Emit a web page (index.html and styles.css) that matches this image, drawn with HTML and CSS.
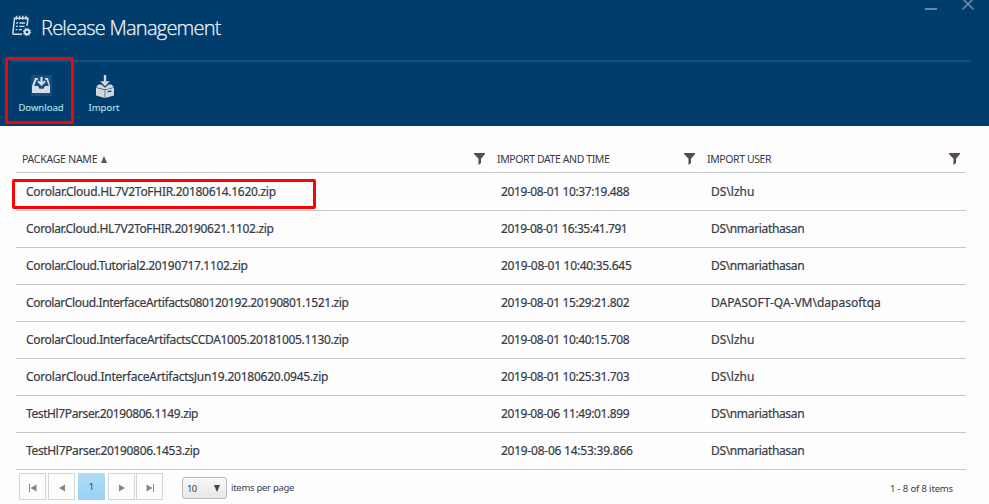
FILE: index.html
```
<!DOCTYPE html>
<html lang="en">
<head>
<meta charset="utf-8">
<title>Release Management</title>
<link rel="stylesheet" href="styles.css">
</head>
<body>
<header class="blade">
  <div class="window-controls">
    <svg width="50" height="12" viewBox="0 0 50 12"><path d="M0 9h12" stroke="#6686a4" stroke-width="2"/><path d="M37.5-1.5l11 11M48.5-1.5l-11 11" stroke="#6f8da8" stroke-width="1.6"/></svg>
  </div>
  <div class="title-row">
    <svg class="title-icon" width="20" height="22" viewBox="0 0 20 22" fill="none" stroke="#d5dde4" stroke-width="1.5">
      <path d="M10 19.2H1.7Q.8 19.2.9 18L2.5 3.2H16L15 11"/>
      <path d="M4.5.8v4M7.6.8v4M10.8.8v4M14 .8v4" stroke-width="1.4"/>
      <path d="M4.3 8h1.8M7.5 8H13M4 11.3h1.8M7.2 11.3h5.3M3.6 14.7h1.8M6.8 14.7H10" stroke-width="1.3"/>
      <circle cx="15" cy="17" r="2.3" stroke-width="2"/>
      <circle cx="15" cy="17" r="3.4" stroke-width="1.3" stroke-dasharray="1.33 1.33"/>
    </svg>
    <h1>Release Management</h1>
  </div>
  <hr>
  <nav class="commands">
    <div class="command boxed">
      <svg width="21" height="21" viewBox="0 0 21 21"><path fill="#174e7a" d="M0 0h21v21H0z"/><path fill="#d2dfe8" d="M4 3h3v1.7H5.5L3.2 11H7l1.5 2.8h4L14 11h3.8l-2.3-6.3H14V3h3l2 8v7H1v-7z"/><path fill="#d2dfe8" d="M9.4 2h2.2v5l2-1.6 1.2 1.4-4.3 4.3-4.3-4.3 1.2-1.4 2 1.6z"/></svg>
      <span>Download</span>
    </div>
    <div class="command">
      <svg class="box-icon" width="20" height="23" viewBox="0 0 20 23" fill="#d3d7db"><path d="M8.8 0h2.4v6.3h3.6L10 11.2 5.2 6.3h3.6zM1 12.2l2.5-2.7h3L10 12.8l3.5-3.3h3l2.5 2.7-8.6 2.2z"/><path d="M1 12.8l8.7 2.2V23L1 20.6zM19 12.8L10.3 15v8l8.7-2.4z"/><path d="M12.8 16.9l3.6-1" stroke="#003c6c" stroke-width="1.5"/></svg>
      <span>Import</span>
    </div>
  </nav>
</header>
<main>
  <div class="grid head">
    <div><span>PACKAGE NAME</span><i class="sort"></i><svg class="filter" width="11" height="12" viewBox="0 0 11 12"><path d="M0 0h11v1L7 5.8V10l-2.5 2V5.8L0 1z"/></svg></div>
    <div><span class="tight">IMPORT DATE AND TIME</span><svg class="filter" width="11" height="12" viewBox="0 0 11 12"><path d="M0 0h11v1L7 5.8V10l-2.5 2V5.8L0 1z"/></svg></div>
    <div><span class="tight">IMPORT USER</span><svg class="filter" width="11" height="12" viewBox="0 0 11 12"><path d="M0 0h11v1L7 5.8V10l-2.5 2V5.8L0 1z"/></svg></div>
  </div>
  <div class="grid row first"><div class="s3"><span class="marked">Corolar.Cloud.HL7V2ToFHIR.20180614.1620.zip</span></div><div class="s4">2019-08-01 10:37:19.488</div><div>DS\lzhu</div></div>
  <div class="grid row"><div class="s35">Corolar.Cloud.HL7V2ToFHIR.20190621.1102.zip</div><div class="s5">2019-08-01 16:35:41.791</div><div class="s35">DS\nmariathasan</div></div>
  <div class="grid row"><div class="s35">Corolar.Cloud.Tutorial2.20190717.1102.zip</div><div class="s3">2019-08-01 10:40:35.645</div><div class="s35">DS\nmariathasan</div></div>
  <div class="grid row"><div class="s4">CorolarCloud.InterfaceArtifacts080120192.20190801.1521.zip</div><div class="s4">2019-08-01 15:29:21.802</div><div>DAPASOFT-QA-VM\dapasoftqa</div></div>
  <div class="grid row"><div class="s35">CorolarCloud.InterfaceArtifactsCCDA1005.20181005.1130.zip</div><div class="s4">2019-08-01 10:40:15.708</div><div>DS\lzhu</div></div>
  <div class="grid row"><div class="s25">CorolarCloud.InterfaceArtifactsJun19.20180620.0945.zip</div><div class="s4">2019-08-01 10:25:31.703</div><div>DS\lzhu</div></div>
  <div class="grid row"><div class="s4">TestHl7Parser.20190806.1149.zip</div><div class="s4">2019-08-06 11:49:01.899</div><div class="s35">DS\nmariathasan</div></div>
  <div class="grid row"><div class="s35">TestHl7Parser.20190806.1453.zip</div><div class="s25">2019-08-06 14:53:39.866</div><div class="s35">DS\nmariathasan</div></div>
  <footer class="pager">
    <span class="page"><svg width="8" height="8"><path d="M0 0h1v8H0zM7.5.5v7L1.5 4z"/></svg></span>
    <span class="page"><svg width="8" height="8"><path d="M7 .5v7L1 4z"/></svg></span>
    <span class="page current">1</span>
    <span class="page"><svg width="8" height="8"><path d="M1 .5v7L7 4z"/></svg></span>
    <span class="page last"><svg width="8" height="8"><path d="M7 0h1v8H7zM.5.5v7l6-3.5z"/></svg></span>
    <span class="size">10<i></i></span>
    <span class="per">items per page</span>
    <span class="count">1 - 8 of 8 items</span>
  </footer>
</main>
</body>
</html>
```
FILE: styles.css
```
*, *::after { box-sizing: border-box; }
body {
  margin: 0;
  height: 504px;
  overflow: hidden;
  background: #fdfdfd;
  color: #383b45;
  font-family: "Noto Sans", "Open Sans", sans-serif;
  font-size: 12px;
}
svg { display: block; flex: none; }
.blade { height: 126px; background: #003c6c; position: relative; }
.window-controls { position: absolute; left: 925px; top: 0; }
.title-row { display: flex; height: 60px; padding: 15px 0 0 12px; }
h1 {
  margin: -1px 0 0 9px;
  font: 300 20px/28px "Open Sans", "Noto Sans", sans-serif;
  letter-spacing: -0.75px;
  color: #f0f4f7;
  -webkit-text-stroke: 0.25px #f0f4f7;
  white-space: nowrap;
}
hr { margin: 0 18px 0 11px; border: 0; height: 2px; background: #174e7a; }
.commands { display: flex; margin-top: -5px; padding-left: 5px; }
.command {
  width: 60px;
  height: 67px;
  padding-top: 18px;
  display: flex;
  flex-direction: column;
  align-items: center;
  font-size: 9.5px;
  line-height: 13px;
  color: #a5dce0;
  -webkit-text-stroke: 0.2px #a5dce0;
}
.command span { margin-top: auto; margin-bottom: 10px; white-space: nowrap; }
.command.boxed { width: 69px; border: 3px solid #f00; border-radius: 2px; padding: 15px 0 0 3px; }
.boxed span { margin-bottom: 7px; }
.box-icon { margin-left: 2px; }
main { padding: 0 23px 0 16px; }
.grid { display: grid; grid-template-columns: 475px 210px 265px; }
.head { height: 47px; padding-top: 20px; font-size: 10.5px; letter-spacing: -0.25px; }
.tight { letter-spacing: -0.4px; }
.head > div {
  display: flex;
  align-items: center;
  padding: 0 6px;
  border-bottom: 1px solid #c8caca;
  white-space: nowrap;
}
.head > div + div { border-left: 1px solid #fdfdfd; padding-left: 5px; }
.sort { margin-left: 4px; border: solid transparent; border-width: 0 3.5px 7px; border-bottom-color: #66534f; }
.filter { margin-left: auto; fill: #5b4b48; }
.row {
  height: 37px;
  border-bottom: 1px solid #c5c7c7;
  line-height: 35px;
  white-space: nowrap;
  -webkit-text-stroke: 0.2px #383b45;
}
.row.first { height: 38px; line-height: 38px; }
.row > div { padding-left: 10px; }
.s25 { letter-spacing: -0.24px; }
.s3 { letter-spacing: -0.29px; }
.s35 { letter-spacing: -0.34px; }
.s4 { letter-spacing: -0.39px; }
.s5 { letter-spacing: -0.48px; }
.marked { position: relative; }
.marked::after {
  content: "";
  position: absolute;
  left: -14px;
  top: -4px;
  width: 304px;
  height: 30px;
  border: 3px solid #f00;
  border-radius: 2px;
}
.pager { display: flex; padding: 3px 13px 0 3px; font-size: 9.5px; }
.page {
  display: flex;
  align-items: center;
  justify-content: center;
  width: 27px;
  height: 27px;
  margin-right: 2px;
  padding-top: 3px;
  border: 1px solid #d2d6d6;
  fill: #8c8482;
}
.page.current { margin: 0 3px 0 1px; padding: 0; border: 0; background: linear-gradient(#b1dcf5, #98d2f4); }
.page:nth-child(4) { margin-right: 1px; }
.page.last { margin-right: 19px; }
.size {
  width: 45px;
  height: 22px;
  margin-top: 4px;
  padding: 0 6px 0 4px;
  display: flex;
  align-items: center;
  justify-content: space-between;
  border: 1px solid #bbb;
  border-radius: 3px;
  background: linear-gradient(#f8f8f8, #e8e8e8);
  letter-spacing: -0.8px;
}
.size i { border: solid transparent; border-width: 7px 3.5px 0; border-top-color: #54413e; }
.per, .count { margin-top: 8px; line-height: 14px; letter-spacing: -0.28px; }
.per { margin-left: 4px; }
.count { margin-left: auto; margin-top: 9px; letter-spacing: -0.15px; }
```
